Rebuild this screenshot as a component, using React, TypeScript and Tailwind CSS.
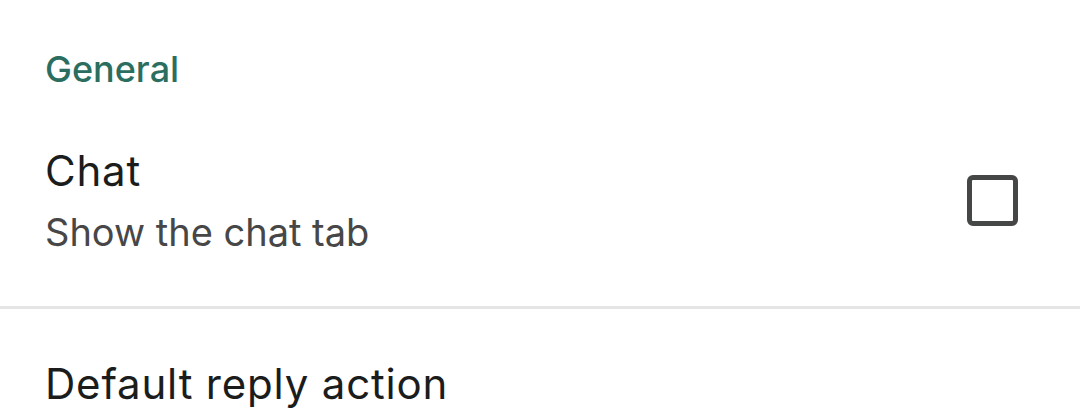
import React from "react";

export default function App() {
  return (
    <div
      className="w-[1080px] h-[419px] bg-white overflow-hidden"
      style={{ fontFamily: "Inter, 'Noto Sans', sans-serif" }}
    >
      <div className="pl-[45px] pt-[48px]">
        <div className="text-[36px] leading-[42px] font-medium text-[#2b6e5f]">General</div>
      </div>
      <div className="flex items-center pl-[45px] pr-[62px] mt-[56px]">
        <div className="flex-1 flex flex-col gap-[13px]">
          <div className="text-[42px] leading-[50px] tracking-[0.8px] text-[#1b1c1c]">Chat</div>
          <div className="text-[38px] leading-[46px] text-[#474747]">Show the chat tab</div>
        </div>
        <div className="w-[51px] h-[51px] rounded-[6px] border-[5px] border-[#444746]" />
      </div>
      <div className="mt-[51px] h-[3px] bg-[#e5e5e5]" />
      <div className="pl-[45px] pt-[50px]">
        <div className="text-[42px] leading-[50px] tracking-[0.8px] text-[#1b1c1c]">Default reply action</div>
      </div>
    </div>
  );
}
